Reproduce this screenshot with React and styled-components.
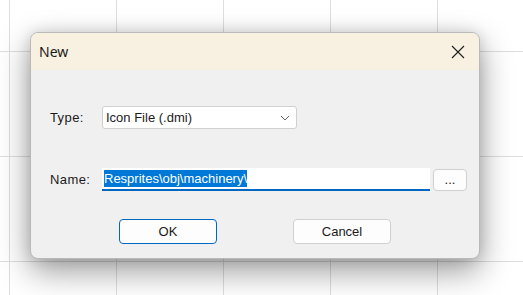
import React from 'react';
import styled, { createGlobalStyle } from 'styled-components';

const GlobalStyle = createGlobalStyle`
	html, body {
		margin: 0;
		padding: 0;
	}
	body {
		font-family: "Liberation Sans", Arial, sans-serif;
	}
`;

// Canvas with the faint grid behind the dialog
const Page = styled.div`
	width: 523px;
	height: 295px;
	overflow: hidden;
	background-color: #ffffff;
	background-image:
		linear-gradient(to right, #dedede 1px, transparent 1px),
		linear-gradient(to bottom, #dedede 1px, transparent 1px);
	background-size: 107px 105px;
	background-position: 9px 51px;
	padding: 32px 0 0 30px;
	box-sizing: border-box;
`;

const Dialog = styled.div`
	width: 450px;
	height: 227px;
	box-sizing: border-box;
	border: 1px solid #b9b9b9;
	border-radius: 8px;
	background: #f0f0f0;
	box-shadow: 0 12px 32px rgba(0, 0, 0, 0.4), 0 0 14px rgba(0, 0, 0, 0.12);
	overflow: hidden;
	display: flex;
	flex-direction: column;
`;

const TitleBar = styled.div`
	height: 37px;
	flex-shrink: 0;
	background: #f8f1e2;
	display: flex;
	align-items: center;
	justify-content: space-between;
	padding: 0 14px 0 8px;
`;

const Title = styled.span`
	font-family: "Noto Sans", "Open Sans", sans-serif;
	font-size: 14px;
	color: #1b1b1b;
	margin-top: -1px;
`;

const CloseButton = styled.button`
	border: none;
	background: none;
	padding: 0;
	width: 14px;
	height: 14px;
	display: flex;
	align-items: center;
	justify-content: center;
`;

const Body = styled.div`
	padding: 36px 0 0 19px;
	display: flex;
	flex-direction: column;
`;

const Row = styled.div`
	display: flex;
	align-items: center;
	height: 23px;
	margin-top: ${props => props.gap || 0}px;
`;

const Label = styled.span`
	width: 52px;
	font-size: 13px;
	letter-spacing: 0.4px;
	color: #1a1a1a;
`;

const Select = styled.div`
	width: 195px;
	height: 23px;
	box-sizing: border-box;
	background: #ffffff;
	border: 1px solid #d0d0d0;
	border-radius: 3px;
	display: flex;
	align-items: center;
	justify-content: space-between;
	padding: 0 6px 0 3px;
	font-size: 13px;
	color: #1a1a1a;
`;

const TextField = styled.div`
	width: 328px;
	height: 23px;
	box-sizing: border-box;
	background: #ffffff;
	border-bottom: 2px solid #0067c0;
	display: flex;
	align-items: center;
	padding: 0 2px;
`;

const Selected = styled.span`
	background: #0078d7;
	color: #ffffff;
	font-size: 13px;
	line-height: 17px;
`;

const Button = styled.button`
	width: ${props => props.w || 98}px;
	height: ${props => props.h || 25}px;
	margin-left: ${props => props.offset || 0}px;
	box-sizing: border-box;
	background: #fdfdfd;
	border: 1px solid ${props => (props.primary ? '#0067c0' : '#d0d0d0')};
	border-radius: 4px;
	font-family: "Liberation Sans", Arial, sans-serif;
	font-size: 13px;
	color: #1a1a1a;
	padding: 0;
	display: flex;
	align-items: center;
	justify-content: center;
`;

const Buttons = styled.div`
	display: flex;
	gap: 76px;
	margin: 28px 0 0 69px;
`;

const App = () => {
	return (
		<Page>
			<GlobalStyle />
			<Dialog>
				<TitleBar>
					<Title>New</Title>
					<CloseButton>
						<svg width="14" height="14" viewBox="0 0 14 14">
							<path d="M1 1 L13 13 M13 1 L1 13" stroke="#1f1f1f" strokeWidth="1.1" />
						</svg>
					</CloseButton>
				</TitleBar>
				<Body>
					<Row>
						<Label>Type:</Label>
						<Select>
							<span>Icon File (.dmi)</span>
							<svg width="10" height="6" viewBox="0 0 10 6">
								<path d="M1 1 L5 5 L9 1" fill="none" stroke="#5f5f5f" strokeWidth="1" />
							</svg>
						</Select>
					</Row>
					<Row gap={39}>
						<Label>Name:</Label>
						<TextField>
							<Selected>Resprites\obj\machinery\</Selected>
						</TextField>
						<Button w={34} h={22} offset={3}>...</Button>
					</Row>
					<Buttons>
						<Button primary>OK</Button>
						<Button>Cancel</Button>
					</Buttons>
				</Body>
			</Dialog>
		</Page>
	);
};

export default App;
